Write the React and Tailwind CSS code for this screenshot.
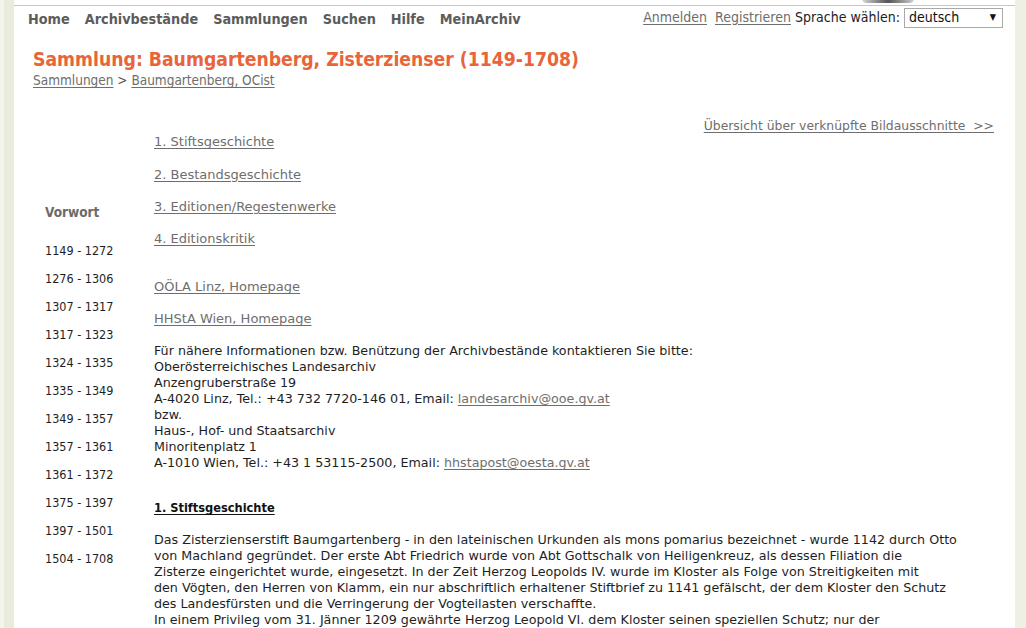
import React from 'react';

const cond = "font-['DejaVu_Sans_Condensed','DejaVu_Sans',sans-serif]";
const sans = "font-['DejaVu_Sans',sans-serif]";

const navItems = ['Home', 'Archivbestände', 'Sammlungen', 'Suchen', 'Hilfe', 'MeinArchiv'];

const periods = [
  '1149 - 1272',
  '1276 - 1306',
  '1307 - 1317',
  '1317 - 1323',
  '1324 - 1335',
  '1335 - 1349',
  '1349 - 1357',
  '1357 - 1361',
  '1361 - 1372',
  '1375 - 1397',
  '1397 - 1501',
  '1504 - 1708',
];

const chapters = [
  '1. Stiftsgeschichte',
  '2. Bestandsgeschichte',
  '3. Editionen/Regestenwerke',
  '4. Editionskritik',
];

const Link = ({ children }) => (
  <a href="#" className="text-[#6e6e6e] underline underline-offset-2">
    {children}
  </a>
);

const App = () => {
  return (
    <div className={`${cond} flex h-[628px] w-[1026px] overflow-hidden bg-[#edf0e2] text-[13px] text-[#1e1e1e]`}>
      <div className="w-[4px] bg-[#f3f5ec]" />
      <div className="w-[10px] bg-[#e9ecdd]" />

      <div className="relative flex w-[1001px] flex-col bg-white">
        <div className="absolute left-[848px] top-[-6px] h-[9px] w-[52px] rounded-full bg-gradient-to-r from-[#d8d8d8] via-[#555] to-[#cfcfcf]" />

        <div className="mt-[5px] border-t border-[#c6c6c6]" />

        <div className="flex items-start justify-between pl-[14px] pr-[12px]">
          <nav className="flex gap-[15px] pt-[3px] text-[14.3px] font-bold text-[#5c5c5c]">
            {navItems.map((item) => (
              <span key={item}>{item}</span>
            ))}
          </nav>
          <div className="flex items-center gap-[4px] pt-[1px] text-[14px]">
            <Link>Anmelden</Link>
            <span className="ml-[4px]">
              <Link>Registrieren</Link>
            </span>
            <span className="text-[#222]">Sprache wählen:</span>
            <div className="flex h-[20px] w-[99px] items-center justify-between border border-[#a9a9a9] pl-[4px] pr-[6px] text-[#111]">
              <span>deutsch</span>
              <span className="text-[9px]">▼</span>
            </div>
          </div>
        </div>

        <div className="pl-[19px] pt-[18px]">
          <h1 className="text-[19.2px] font-bold leading-[24px] text-[#e8643a]">
            Sammlung: Baumgartenberg, Zisterzienser (1149-1708)
          </h1>
          <div className="text-[13.5px] leading-[16px] text-[#555]">
            <Link>Sammlungen</Link> &gt; <Link>Baumgartenberg, OCist</Link>
          </div>
        </div>

        <div className="flex pt-[30px]">
          <aside className="w-[140px] shrink-0 pl-[31px] pt-[84px]">
            <div className="text-[13.5px] font-bold text-[#6a6a6a]">Vorwort</div>
            <ul className="mt-[20px] flex flex-col gap-[12px] text-[12.5px]">
              {periods.map((p) => (
                <li key={p} className="leading-[16px]">
                  {p}
                </li>
              ))}
            </ul>
          </aside>

          <main className={`${sans} flex-1 pr-[21px] text-[12.7px] leading-[16px]`}>
            <div className="text-right text-[12.4px]">
              <Link>Übersicht über verknüpfte Bildausschnitte&nbsp;&nbsp;&gt;&gt;</Link>
            </div>

            <ul className="flex flex-col gap-[16px] text-[13px]">
              {chapters.map((c) => (
                <li key={c} className="leading-[16.2px]">
                  <Link>{c}</Link>
                </li>
              ))}
            </ul>

            <ul className="mt-[32px] flex flex-col gap-[16px] text-[13px]">
              <li>
                <Link>OÖLA Linz, Homepage</Link>
              </li>
              <li>
                <Link>HHStA Wien, Homepage</Link>
              </li>
            </ul>

            <p className="mt-[16px]">
              Für nähere Informationen bzw. Benützung der Archivbestände kontaktieren Sie bitte:
              <br />
              Oberösterreichisches Landesarchiv
              <br />
              Anzengruberstraße 19
              <br />
              A-4020 Linz, Tel.: +43 732 7720-146 01, Email: <Link>landesarchiv@ooe.gv.at</Link>
              <br />
              bzw.
              <br />
              Haus-, Hof- und Staatsarchiv
              <br />
              Minoritenplatz 1
              <br />
              A-1010 Wien, Tel.: +43 1 53115-2500, Email: <Link>hhstapost@oesta.gv.at</Link>
            </p>

            <h2 className={`${cond} mt-[29px] text-[12.7px] font-bold text-[#111] underline underline-offset-2`}>
              1. Stiftsgeschichte
            </h2>

            <p className="mt-[16px] whitespace-nowrap">
              Das Zisterzienserstift Baumgartenberg - in den lateinischen Urkunden als mons pomarius bezeichnet - wurde 1142 durch Otto
              <br />
              von Machland gegründet. Der erste Abt Friedrich wurde von Abt Gottschalk von Heiligenkreuz, als dessen Filiation die
              <br />
              Zisterze eingerichtet wurde, eingesetzt. In der Zeit Herzog Leopolds IV. wurde im Kloster als Folge von Streitigkeiten mit
              <br />
              den Vögten, den Herren von Klamm, ein nur abschriftlich erhaltener Stiftbrief zu 1141 gefälscht, der dem Kloster den Schutz
              <br />
              des Landesfürsten und die Verringerung der Vogteilasten verschaffte.
              <br />
              In einem Privileg vom 31. Jänner 1209 gewährte Herzog Leopold VI. dem Kloster seinen speziellen Schutz; nur der
            </p>
          </main>
        </div>
      </div>

      <div className="flex-1 bg-[#edf0e2]" />
    </div>
  );
};

export default App;
